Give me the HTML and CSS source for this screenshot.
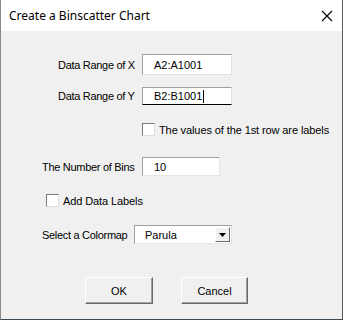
FILE: index.html
```html
<!DOCTYPE html>
<html lang="en">
<head>
    <meta charset="UTF-8">
    <title>Create a Binscatter Chart</title>
    <link rel="stylesheet" href="styles.css">
</head>
<body>

    <div class="window">
        <div class="titlebar">
            <span class="title">Create a Binscatter Chart</span>
            <svg class="close" width="12" height="12" viewBox="0 0 12 12">
                <path d="M1 1 L11 11 M11 1 L1 11" stroke="#000" stroke-width="1.1" fill="none"/>
            </svg>
        </div>

        <div class="content">
            <div class="row row-x">
                <label class="label label-range">Data Range of X</label>
                <div class="field field-range">A2:A1001</div>
            </div>

            <div class="row row-y">
                <label class="label label-range">Data Range of Y</label>
                <div class="field field-range field-focus">B2:B1001<span class="caret"></span></div>
            </div>

            <div class="row check-row check-header">
                <span class="checkbox"></span>
                <span>The values of the 1st row are labels</span>
            </div>

            <div class="row row-bins">
                <label class="label label-bins">The Number of Bins</label>
                <div class="field field-bins">10</div>
            </div>

            <div class="row check-row check-labels">
                <span class="checkbox"></span>
                <span>Add Data Labels</span>
            </div>

            <div class="row row-colormap">
                <label class="label label-colormap">Select a Colormap</label>
                <div class="select">
                    <span class="select-text">Parula</span>
                    <span class="select-btn">
                        <svg width="7" height="4" viewBox="0 0 7 4"><path d="M0 0 H7 L3.5 4 Z" fill="#000"/></svg>
                    </span>
                </div>
            </div>

            <div class="row buttons">
                <button class="btn btn-ok">OK</button>
                <button class="btn btn-cancel">Cancel</button>
            </div>
        </div>
    </div>

</body>
</html>
```

FILE: styles.css
```css
body {
    margin: 0;
    font-family: 'Liberation Sans', Arial, sans-serif;
    font-size: 11px;
    color: #000;
    background: #f0f0f0;
}

.window {
    box-sizing: border-box;
    width: 343px;
    height: 320px;
    background: #f0f0f0;
    border-left: 1px solid #8a8a8a;
    border-right: 1px solid #5c5c5c;
    border-bottom: 1px solid #3c4a55;
}

.titlebar {
    height: 31px;
    background: #fff;
    display: flex;
    align-items: center;
    justify-content: space-between;
    padding: 0 9px 0 8px;
}

.title {
    font-family: 'Noto Sans', sans-serif;
    font-size: 12px;
    color: #000;
    margin-top: -1px;
}

.content {
    display: flex;
    flex-direction: column;
}

.row {
    display: flex;
    align-items: center;
}

.label {
    display: block;
    letter-spacing: -0.3px;
}

/* range inputs */
.row-x {
    margin-top: 23px;
    padding-left: 57px;
}

.row-y {
    margin-top: 12px;
    padding-left: 57px;
}

.label-range {
    width: 84px;
}

.field {
    box-sizing: border-box;
    background: #fff;
    border-top: 1px solid #a0a0a0;
    border-left: 1px solid #a0a0a0;
    border-right: 1px solid #e3e3e3;
    border-bottom: 1px solid #e3e3e3;
    padding-left: 11px;
    display: flex;
    align-items: center;
}

.field-range {
    width: 90px;
    height: 21px;
}

.field-focus {
    height: 18px;
    border-bottom: 1px solid #000;
}

.caret {
    display: inline-block;
    width: 1px;
    height: 13px;
    background: #000;
    margin-left: 1px;
}

/* checkboxes */
.check-row span:last-child {
    margin-left: 4px;
    letter-spacing: -0.1px;
}

.check-header {
    margin-top: 18px;
    padding-left: 141px;
}

.check-labels {
    margin-top: 18px;
    padding-left: 45px;
}

.checkbox {
    box-sizing: border-box;
    width: 13px;
    height: 13px;
    background: #fff;
    border-top: 1px solid #7a7a7a;
    border-left: 1px solid #7a7a7a;
    border-right: 1px solid #dcdcdc;
    border-bottom: 1px solid #dcdcdc;
}

/* bins */
.row-bins {
    margin-top: 21px;
    padding-left: 41px;
}

.label-bins {
    width: 100px;
}

.field-bins {
    width: 78px;
    height: 19px;
}

/* colormap */
.row-colormap {
    margin-top: 18px;
    padding-left: 41px;
}

.label-colormap {
    width: 92px;
}

.select {
    box-sizing: border-box;
    width: 98px;
    height: 19px;
    background: #fff;
    border-top: 1px solid #a0a0a0;
    border-left: 1px solid #a0a0a0;
    border-right: 1px solid #e3e3e3;
    border-bottom: 1px solid #e3e3e3;
    display: flex;
    align-items: center;
    justify-content: space-between;
    padding-left: 10px;
    padding-right: 1px;
}

.select-btn {
    box-sizing: border-box;
    width: 15px;
    height: 15px;
    background: #f0f0f0;
    border-top: 1px solid #fff;
    border-left: 1px solid #fff;
    border-right: 1px solid #6a6a6a;
    border-bottom: 1px solid #6a6a6a;
    display: flex;
    align-items: center;
    justify-content: center;
}

/* buttons */
.buttons {
    margin-top: 33px;
    padding-left: 84px;
    gap: 28px;
}

.btn {
    box-sizing: border-box;
    height: 27px;
    background: #f0f0f0;
    font-family: 'Liberation Sans', Arial, sans-serif;
    font-size: 11px;
    color: #000;
    border-top: 1px solid #fff;
    border-left: 1px solid #fff;
    border-right: 1px solid #696969;
    border-bottom: 1px solid #696969;
    box-shadow: inset -1px -1px 0 #a0a0a0;
    padding: 0;
}

.btn-ok {
    width: 68px;
}

.btn-cancel {
    width: 67px;
}
```
